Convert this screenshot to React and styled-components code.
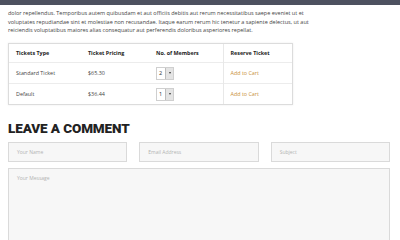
import styled, { createGlobalStyle } from 'styled-components';

const GlobalStyle = createGlobalStyle`
    html, body {
        margin: 0;
        padding: 0;
        background: #ffffff;
        font-family: "Open Sans", "Liberation Sans", sans-serif;
        overflow: hidden;
    }
`;

const TopBar = styled.div`
    height: 5px;
    background: #4d5160;
`;

const Container = styled.div`
    padding: 0 10px 0 8px;
`;

const Intro = styled.p`
    margin: 4px 0 0;
    font-size: 5.5px;
    line-height: 8.5px;
    color: #444;
    white-space: nowrap;
`;

const TableWrap = styled.div`
    margin-top: 8px;
    width: 283px;
    border: 1px solid #dcdcdc;
    box-shadow: 0 0 2px rgba(0, 0, 0, 0.08);
`;

const Table = styled.table`
    width: 100%;
    table-layout: fixed;
    border-collapse: collapse;
    font-size: 5.4px;
    color: #444;
`;

const Th = styled.th`
    box-sizing: border-box;
    text-align: left;
    font-weight: 700;
    color: #222;
    height: 19px;
    padding: 0 0 0 7px;
    width: ${(p) => (p.$w ? `${p.$w}px` : 'auto')};
    border-left: ${(p) => (p.$divider ? '1px solid #e8e8e8' : 'none')};
`;

const Td = styled.td`
    height: 20px;
    padding: 0 0 0 7px;
    border-top: 1px solid #ececec;
    border-left: ${(p) => (p.$divider ? '1px solid #e8e8e8' : 'none')};
`;

const CartLink = styled.a`
    color: #c8913a;
    text-decoration: none;
`;

const Select = styled.span`
    display: inline-flex;
    align-items: center;
    height: 11px;
    border: 1px solid #cfcfcf;
    background: #fff;
    font-size: 5.6px;
    color: #333;
`;

const SelectValue = styled.span`
    padding: 0 3px 0 2px;
`;

const SelectArrow = styled.span`
    width: 7px;
    height: 11px;
    background: #e4e4e4;
    border-left: 1px solid #bdbdbd;
    display: flex;
    align-items: center;
    justify-content: center;
    &::after {
        content: '';
        border-left: 1.5px solid transparent;
        border-right: 1.5px solid transparent;
        border-top: 2px solid #333;
    }
`;

const Heading = styled.h2`
    margin: 15px 0 0;
    font-family: Roboto, "Liberation Sans", sans-serif;
    font-weight: 900;
    font-size: 13.5px;
    line-height: 16px;
    color: #222;
    letter-spacing: -0.1px;
`;

const FieldRow = styled.div`
    margin-top: 6px;
    display: grid;
    grid-template-columns: 1fr 1fr 1fr;
    gap: 12px;
`;

const Input = styled.div`
    height: 18px;
    border: 1px solid #dadada;
    background: #f7f7f7;
    display: flex;
    align-items: center;
    padding-left: 8px;
    font-size: 5px;
    color: #b3b3b3;
`;

const Message = styled.div`
    margin-top: 6px;
    height: 90px;
    border: 1px solid #dadada;
    background: #f7f7f7;
    padding: 6px 8px;
    font-size: 5px;
    color: #b3b3b3;
`;

const tickets = [
    { type: 'Standard Ticket', price: '$65.30', qty: 2 },
    { type: 'Default', price: '$36.44', qty: 1 },
];

export default function App() {
    return (
        <>
            <GlobalStyle />
            <TopBar />
            <Container>
                <Intro>
                    dolor repellendus. Temporibus autem quibusdam et aut officiis debitis aut rerum necessitatibus saepe eveniet ut et<br />
                    voluptates repudiandae sint et molestiae non recusandae. Itaque earum rerum hic tenetur a sapiente delectus, ut aut<br />
                    reiciendis voluptatibus maiores alias consequatur aut perferendis doloribus asperiores repellat.
                </Intro>
                <TableWrap>
                    <Table>
                        <thead>
                            <tr>
                                <Th $w={72}>Tickets Type</Th>
                                <Th $w={68}>Ticket Pricing</Th>
                                <Th $w={74}>No. of Members</Th>
                                <Th $divider>Reserve Ticket</Th>
                            </tr>
                        </thead>
                        <tbody>
                            {tickets.map((t) => (
                                <tr key={t.type}>
                                    <Td>{t.type}</Td>
                                    <Td>{t.price}</Td>
                                    <Td>
                                        <Select>
                                            <SelectValue>{t.qty}</SelectValue>
                                            <SelectArrow />
                                        </Select>
                                    </Td>
                                    <Td $divider>
                                        <CartLink href="#">Add to Cart</CartLink>
                                    </Td>
                                </tr>
                            ))}
                        </tbody>
                    </Table>
                </TableWrap>
                <Heading>LEAVE A COMMENT</Heading>
                <FieldRow>
                    <Input>Your Name</Input>
                    <Input>Email Address</Input>
                    <Input>Subject</Input>
                </FieldRow>
                <Message>Your Message</Message>
            </Container>
        </>
    );
}
